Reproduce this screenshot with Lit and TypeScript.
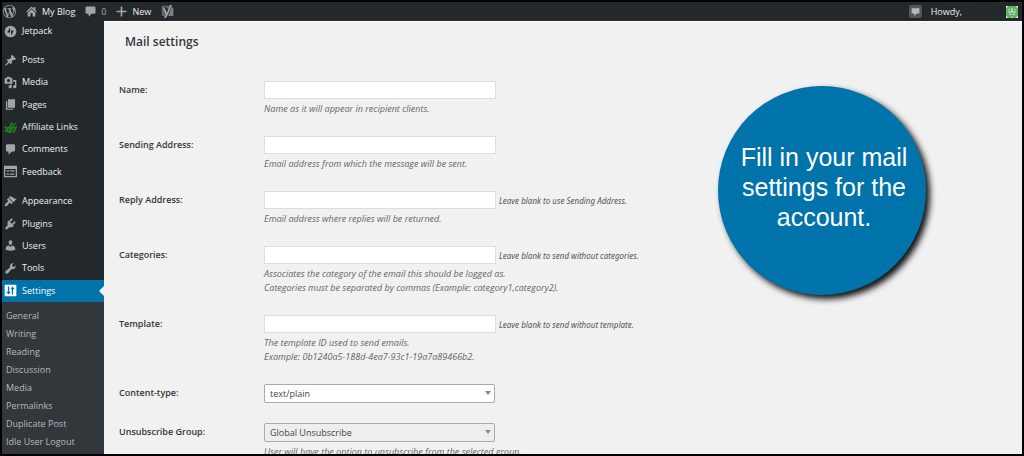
import { LitElement, html, css, svg, nothing } from "lit";
import { customElement, property } from "lit/decorators.js";
import { classMap } from "lit/directives/class-map.js";

const ICONS: Record<string, unknown> = {
  wordpress: svg`<path d="M20 10c0-5.51-4.49-10-10-10C4.48 0 0 4.49 0 10c0 5.52 4.48 10 10 10 5.51 0 10-4.48 10-10zM7.78 15.37L4.37 6.22c.55-.02 1.17-.08 1.17-.08.5-.06.44-1.13-.06-1.11 0 0-1.45.11-2.37.11-.18 0-.37 0-.58-.01C4.12 2.69 6.87 1.11 10 1.11c2.33 0 4.45.87 6.05 2.34-.68-.11-1.65.39-1.65 1.58 0 .74.45 1.36.9 2.1.35.61.55 1.36.55 2.46 0 1.49-1.4 5-1.4 5l-3.03-8.37c.54-.02.82-.17.82-.17.5-.05.44-1.25-.06-1.22 0 0-1.44.12-2.38.12-.87 0-2.33-.12-2.33-.12-.5-.03-.56 1.2-.06 1.22l.92.08 1.26 3.41zM17.41 10c.24-.64.74-1.87.43-4.25.7 1.29 1.05 2.71 1.05 4.25 0 3.29-1.73 6.24-4.4 7.78.97-2.59 1.94-5.2 2.92-7.78zM6.1 18.09C3.12 16.65 1.11 13.53 1.11 10c0-1.3.23-2.48.72-3.59C3.25 10.3 4.67 14.2 6.1 18.09zm4.03-6.63l2.58 6.98c-.86.29-1.76.45-2.71.45-.79 0-1.57-.11-2.29-.33.81-2.38 1.62-4.74 2.42-7.1z"/>`,
  home: svg`<path fill-rule="evenodd" d="M17 7.500l2.500 2.700-1.300 1.500L10 4.100l-8.200 7.600L.5 10.200 10 1l4 3.800V2h3zM10 5.800l7 6.500V19h-5v-6H8v6H3v-6.700z"/>`,
  comment: svg`<path d="M5 2h10c1.1 0 2 .9 2 2v7c0 1.1-.9 2-2 2h-3l-5 5v-5H5c-1.1 0-2-.9-2-2V4c0-1.1.9-2 2-2z"/>`,
  bubble: svg`<path d="M2.500 1h15C18.300 1 19 1.700 19 2.500v10c0 .8-.7 1.500-1.500 1.500H12l-5.500 5.500V14h-4C1.700 14 1 13.300 1 12.500v-10C1 1.700 1.700 1 2.500 1z"/>`,
  plus: svg`<path d="M19 8.500v3h-7.500V19h-3v-7.500H1v-3h7.500V1h3v7.500z"/>`,
  yoast: svg`<path d="M3 1h11L11 7 9 4H5l4 10-1 3H3a2 2 0 0 1-2-2V3a2 2 0 0 1 2-2z" opacity=".5"/><path d="M16 4h2a1 1 0 0 1 1 1v12H11z" opacity=".7"/><path d="M3 5h3l3 7 5-12h3L10 16c-1 2.500-2.500 4-5 4v-2.500c1.500 0 2.300-1 2.600-2.500z"/>`,
  jetpack: svg`<circle cx="10" cy="10" r="9"/><path fill="#23282d" d="M9.300 4v8L5 11zM10.800 16V8L15 9z"/>`,
  pin: svg`<path d="M10.440 3.020l1.820-1.820 6.360 6.350-1.830 1.820c-1.050-.68-2.480-.57-3.410.36l-.75.75c-.92.930-1.040 2.350-.35 3.410l-1.830 1.820-2.410-2.410-2.800 2.790c-.42.420-3.380 2.710-3.800 2.290s1.860-3.390 2.280-3.810l2.790-2.790L4.100 9.360l1.830-1.820c1.050.690 2.480.570 3.400-.36l.75-.75c.930-.92 1.050-2.350.36-3.410z"/>`,
  media: svg`<path d="M13 11V4c0-.55-.45-1-1-1h-1.670L9 1H5L3.670 3H2c-.55 0-1 .45-1 1v7c0 .55.450 1 1 1h10c.55 0 1-.45 1-1zM7 4.500c1.380 0 2.500 1.120 2.500 2.500S8.380 9.500 7 9.500 4.500 8.380 4.500 7 5.620 4.500 7 4.500zM14 6h5v10.500c0 1.380-1.120 2.500-2.500 2.500S14 17.880 14 16.500s1.120-2.500 2.500-2.500c.17 0 .34.020.5.050V9h-3V6zm-4 8.050V13h2v3.500c0 1.380-1.120 2.500-2.500 2.500S7 17.880 7 16.500 8.120 14 9.500 14c.17 0 .34.020.5.050z"/>`,
  pages: svg`<path d="M6 15V2h11v13H6zm-1 1.500h9V18H3V5h2z"/>`,
  affiliate: svg`<g fill="none" stroke="#1d7a1d" stroke-width="3" stroke-linecap="round"><path d="M2 10c4-1 2 7 5 7s2-12 5-14M10 17c2 0 3-13 7-13M15 17c2 0 1-7 4-8M2 15h3M7 10h11"/></g>`,
  feedback: svg`<path fill-rule="evenodd" d="M0 1h20v18H0zM2 6v11h16V6zM4 8h4v2H4zM9.500 8H16v2H9.500zM4 13h4v2H4zM9.500 13H16v2H9.500z"/>`,
  brush: svg`<path d="M14.480 11.060L7.410 3.990l1.500-1.500c.5-.56 2.300-.47 3.510.32 1.210.8 1.430 1.280 2.910 2.100 1.180.640 2.450 1.260 4.450.850zm-.71.71L6.700 4.700 4.930 6.470c-.39.390-.39 1.020 0 1.410l1.060 1.060c.39.390.39 1.030 0 1.420-.6.6-1.430 1.110-2.210 1.690-.35.260-.7.530-1.010.840C1.430 14.230.4 16.080 1.400 17.070c.99 1 2.840-.03 4.180-1.360.31-.31.580-.66.850-1.020.57-.78 1.080-1.610 1.690-2.210.39-.39 1.020-.39 1.410 0l1.060 1.060c.39.390 1.020.390 1.410 0z"/>`,
  plug: svg`<path d="M13.110 4.360L9.870 7.600 8 5.730l3.240-3.240c.35-.34 1.050-.2 1.560.32.52.510.660 1.210.310 1.550zm-7 1.770l.91-.9 8.200 8.200-1 1c-.71.710-2.030 1.160-3.220 1.160H8.140L4.900 18.830c-.26.260-.57.430-.99.370-.33-.05-1.870-1.340-1.970-1.970-.06-.42.110-.73.370-.99l3.240-3.240v-2.940c0-1.190-.15-3.220.56-3.930zm6.260 3.970l3.240-3.240c.34-.35 1.040-.21 1.550.310.52.510.660 1.210.310 1.550l-3.240 3.250z"/>`,
  user: svg`<path d="M10 9.250c-2.270 0-2.730-3.440-2.730-3.440C7 4.020 7.820 2 9.970 2c2.160 0 2.980 2.020 2.710 3.810 0 0-.41 3.440-2.680 3.440zm0 2.570L12.720 10c2.390 0 4.520 2.330 4.520 4.530v2.490s-3.650 1.130-7.240 1.130c-3.650 0-7.240-1.130-7.240-1.130v-2.490c0-2.250 1.940-4.480 4.470-4.480z"/>`,
  wrench: svg`<path d="M16.680 9.770c-1.340 1.340-3.300 1.670-4.950.990l-5.410 6.520c-.99.990-2.590.990-3.580 0s-.99-2.590 0-3.570l6.520-5.420c-.68-1.650-.35-3.610.99-4.950 1.280-1.280 3.120-1.620 4.720-1.060l-2.890 2.890 2.820 2.820 2.860-2.870c.53 1.580.180 3.390-1.080 4.650z"/>`,
  sliders: svg`<path fill-rule="evenodd" d="M1 1h18v18H1zM6 4v8H3.500l3.500 4 3.500-4H8V4zM12 16V8H9.800L13 4l3.500 4H14v8z"/>`,
  notice: svg`<rect width="20" height="20" rx="3" fill="#50555a"/><path fill="#b4b9be" d="M4 5h12v8h-4l-4 4v-4H4z"/>`,
  avatar: svg`<path fill="#dcefdc" d="M0 0h20v20H0z"/><path fill="#5fae62" d="M0 4l4-4h12l4 4v12l-4 4H4l-4-4z"/><path fill="#dcefdc" d="M3 9h14v2H3zM9 3h2v6H9zM6 13h3v2H6zM12 13h3v2h-3zM9 18h2v2H9zM4 5h2v2H4zM14 5h2v2h-2z"/>`,
};

const icon = (name: string) =>
  html`<svg class="icon ${name}" viewBox="0 0 20 20" aria-hidden="true">${ICONS[name]}</svg>`;

const shared = css`
  a { color: inherit; text-decoration: none; }
  .icon { width: 13px; height: 13px; flex: none; fill: currentColor; display: block; }
`;

@customElement("admin-bar")
class AdminBar extends LitElement {
  static styles = [shared, css`
    :host { display: flex; align-items: center; gap: 10px; height: 19px; padding: 0 4px 0 1px;
      background: #23282d; color: #eee; font-size: 9px; line-height: 18px; }
    .item { display: flex; align-items: center; gap: 5px; color: #eee; }
    .item .icon { color: #a0a5aa; }
    .item .home, .item .bubble, .item .plus { width: 11px; height: 11px; }
    .count { color: #a0a5aa; }
    .account { margin-left: auto; display: flex; align-items: center; gap: 9px; }
    .profile { margin-left: 35px; }
    .profile .icon { width: 12px; height: 12px; }
  `];
  render() {
    return html`
      <a class="item" href="#" aria-label="WordPress">${icon("wordpress")}</a>
      <a class="item" href="#">${icon("home")}My Blog</a>
      <a class="item" href="#">${icon("bubble")}<span class="count">0</span></a>
      <a class="item" href="#">${icon("plus")}New</a>
      <a class="item" href="#" aria-label="SEO">${icon("yoast")}</a>
      <div class="account">
        <a class="item" href="#" aria-label="Notifications">${icon("notice")}</a>
        <a class="item" href="#">Howdy,</a>
        <a class="profile" href="#" aria-label="Profile">${icon("avatar")}</a>
      </div>`;
  }
}

type Entry = [string, string];
const CONTENT: Entry[] = [["Posts", "pin"], ["Media", "media"], ["Pages", "pages"],
  ["Affiliate Links", "affiliate"], ["Comments", "comment"], ["Feedback", "feedback"]];
const ADMIN: Entry[] = [["Appearance", "brush"], ["Plugins", "plug"], ["Users", "user"],
  ["Tools", "wrench"], ["Settings", "sliders"]];
const SUBMENU = ["General", "Writing", "Reading", "Discussion", "Media", "Permalinks",
  "Duplicate Post", "Idle User Logout"];

@customElement("admin-menu")
class AdminMenu extends LitElement {
  static styles = [shared, css`
    :host { display: block; background: #23282d; color: #eee; font-size: 9px; line-height: 12px; }
    nav { display: flex; flex-direction: column; height: 100%; }
    .group { display: grid; grid-auto-rows: 1fr; margin-bottom: 7px; }
    .single { height: 20px; margin-bottom: 8px; }
    .content { height: 134px; }
    .admin { height: 112px; margin-bottom: 0; }
    .item { position: relative; display: flex; align-items: center; gap: 5px; padding-left: 2px; }
    .item .icon { color: #a0a5aa; }
    .current { background: #0073aa; color: #fff; }
    .current .icon { color: #fff; }
    .current::after { content: ""; position: absolute; right: 0; top: 50%; margin-top: -5px;
      border: 5px solid transparent; border-right-color: #f1f1f1; border-left-width: 0; }
    .submenu { display: grid; grid-auto-rows: 18px; align-content: start; align-items: center; flex: 1;
      padding: 5px 4px 0; background: #32373c; color: #b4b9be; }
  `];
  private item([label, name]: Entry) {
    const current = label === "Settings";
    return html`<a class=${classMap({ item: true, current })} href="#"
      aria-current=${current ? "page" : nothing}>${icon(name)}${label}</a>`;
  }
  render() {
    return html`<nav aria-label="Admin menu">
      <div class="group single">${this.item(["Jetpack", "jetpack"])}</div>
      <div class="group content">${CONTENT.map((e) => this.item(e))}</div>
      <div class="group admin">${ADMIN.map((e) => this.item(e))}</div>
      <div class="submenu">${SUBMENU.map((s) => html`<a href="#">${s}</a>`)}</div>
    </nav>`;
  }
}

interface Field { id: string; label: string; hint?: string; notes?: string[]; option?: string; disabled?: boolean; }
const FIELDS: Field[] = [
  { id: "name", label: "Name:", notes: ["Name as it will appear in recipient clients."] },
  { id: "from", label: "Sending Address:", notes: ["Email address from which the message will be sent."] },
  { id: "reply", label: "Reply Address:", hint: "Leave blank to use Sending Address.", notes: ["Email address where replies will be returned."] },
  { id: "categories", label: "Categories:", hint: "Leave blank to send without categories.",
    notes: ["Associates the category of the email this should be logged as.", "Categories must be separated by commas (Example: category1,category2)."] },
  { id: "template", label: "Template:", hint: "Leave blank to send without template.",
    notes: ["The template ID used to send emails.", "Example: 0b1240a5-188d-4ea7-93c1-19a7a89466b2."] },
  { id: "type", label: "Content-type:", option: "text/plain" },
  { id: "group", label: "Unsubscribe Group:", option: "Global Unsubscribe", disabled: true,
    notes: ["User will have the option to unsubscribe from the selected group."] },
];

@customElement("settings-field")
class SettingsField extends LitElement {
  @property({ attribute: false }) field!: Field;
  static styles = css`
    :host { display: grid; grid-template-columns: 145px 1fr; font-size: 9px; }
    label { font-weight: 600; color: #32373c; line-height: 18px; }
    .line { display: flex; align-items: center; gap: 3px; }
    input, select { box-sizing: border-box; width: 232px; margin: 0; font: inherit; outline: none; }
    input { height: 18px; padding: 0 4px; border: 1px solid #ddd; background: #fff; }
    .picker { position: relative; display: flex; }
    select { appearance: none; width: 231px; height: 19px; padding: 0 5px; border: 1px solid #aaa; border-radius: 2px;
      background: #fff; color: #444; opacity: 1; }
    select:disabled { background: #eee; }
    .picker svg { position: absolute; right: 4px; top: 7px; width: 6px; height: 4px; fill: #888; pointer-events: none; }
    .hint { font-family: "Noto Sans", sans-serif; font-size: 8px; font-style: italic; color: #555; white-space: nowrap; }
    .note { margin: 3px 0 0; font-style: italic; line-height: 14px; color: #666; }
  `;
  render() {
    const f = this.field;
    return html`
      <label for=${f.id}>${f.label}</label>
      <div>
        <div class="line">
          ${f.option
            ? html`<span class="picker"><select id=${f.id} ?disabled=${f.disabled}><option>${f.option}</option></select>
                <svg viewBox="0 0 6 4" aria-hidden="true"><path d="M0 0h6L3 4z"/></svg></span>`
            : html`<input id=${f.id} type="text" />`}
          ${f.hint ? html`<span class="hint">${f.hint}</span>` : nothing}
        </div>
        ${f.notes ? html`<p class="note">${f.notes.map((n, i) => html`${i ? html`<br />` : nothing}${n}`)}</p>` : nothing}
      </div>`;
  }
}

@customElement("app-root")
class AppRoot extends LitElement {
  static styles = css`
    :host { display: flex; flex-direction: column; box-sizing: border-box; height: 100vh; overflow: hidden;
      border: 2px solid #000; background: #f1f1f1; font-family: "Open Sans", "Noto Sans", sans-serif; }
    admin-bar { flex: none; }
    .body { display: grid; grid-template-columns: 102px 1fr; flex: 1; min-height: 0; }
    main { position: relative; min-width: 0; overflow: hidden; padding: 11px 15px 0; border-top: 1px solid #fff; }
    h2 { margin: 0 0 30px 6px; font-size: 12px; line-height: 18px; font-weight: 600; color: #32373c; }
    form { display: grid; gap: 20px; }
    .callout { position: absolute; top: 64px; right: 96px; display: flex; align-items: center; justify-content: center;
      box-sizing: border-box; width: 208px; height: 209px; padding: 0 14px 8px 18px; border-radius: 50%;
      background: #0073aa; color: #fff; text-align: center; font-family: "Liberation Sans", Arial, sans-serif;
      font-size: 25px; line-height: 30px; box-shadow: 4px 4px 6px #111; }
  `;
  render() {
    return html`
      <admin-bar></admin-bar>
      <div class="body">
        <admin-menu></admin-menu>
        <main>
          <h2>Mail settings</h2>
          <form>${FIELDS.map((f) => html`<settings-field .field=${f}></settings-field>`)}</form>
          <aside class="callout">Fill in your mail settings for the account.</aside>
        </main>
      </div>`;
  }
}
